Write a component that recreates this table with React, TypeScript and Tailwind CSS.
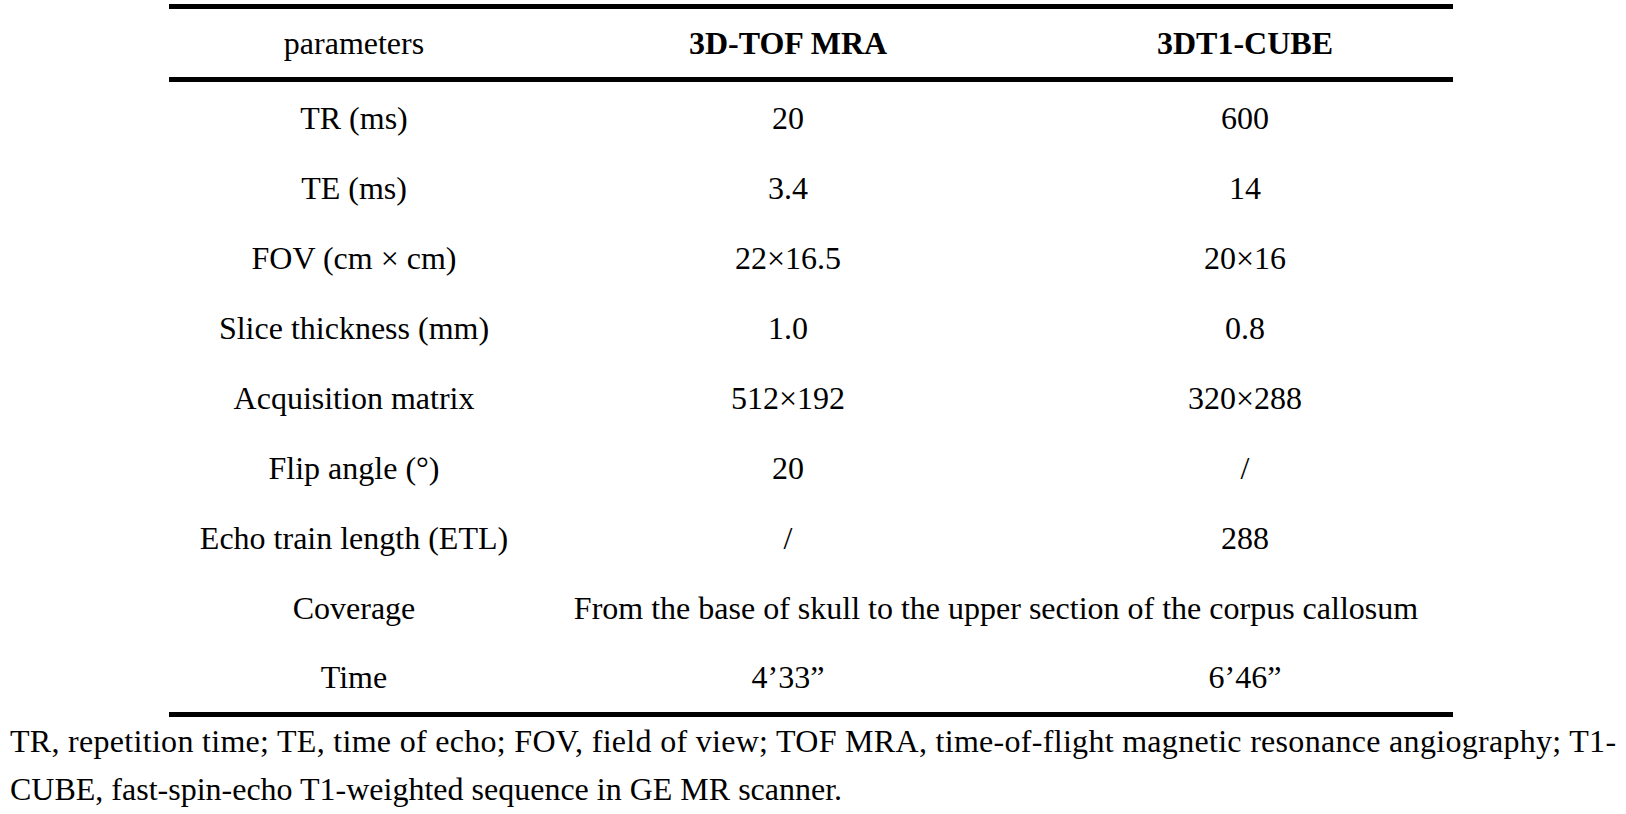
import React from "react";

const rows: [string, string, string][] = [
  ["TR (ms)", "20", "600"],
  ["TE (ms)", "3.4", "14"],
  ["FOV (cm × cm)", "22×16.5", "20×16"],
  ["Slice thickness (mm)", "1.0", "0.8"],
  ["Acquisition matrix", "512×192", "320×288"],
  ["Flip angle (°)", "20", "/"],
  ["Echo train length (ETL)", "/", "288"],
];

export default function App() {
  return (
    <div
      className="w-[1626px] h-[814px] bg-white text-black overflow-hidden text-[32px]"
      style={{ fontFamily: '"Liberation Serif", "Times New Roman", serif' }}
    >
      <div className="pt-[4px] pl-[169px]">
        <div className="w-[1284px] border-t-[5px] border-b-[5px] border-black">
          <div className="grid grid-cols-[370px_498px_416px] h-[73px] items-center border-b-[5px] border-black">
            <div className="text-center">parameters</div>
            <div className="text-center font-bold">3D-TOF MRA</div>
            <div className="text-center font-bold">3DT1-CUBE</div>
          </div>
          {rows.map((r) => (
            <div key={r[0]} className="grid grid-cols-[370px_498px_416px] h-[70px] items-center pt-[2px]">
              <div className="text-center">{r[0]}</div>
              <div className="text-center">{r[1]}</div>
              <div className="text-center">{r[2]}</div>
            </div>
          ))}
          <div className="grid grid-cols-[370px_914px] h-[70px] items-center pt-[1px]">
            <div className="text-center">Coverage</div>
            <div className="text-center whitespace-nowrap">From the base of skull to the upper section of the corpus callosum</div>
          </div>
          <div className="grid grid-cols-[370px_498px_416px] h-[70px] items-center">
            <div className="text-center">Time</div>
            <div className="text-center">4’33”</div>
            <div className="text-center">6’46”</div>
          </div>
        </div>
      </div>
      <div className="pl-[10px] leading-[48px]">
        <div className="whitespace-nowrap tracking-[0.3px]">
          TR, repetition time; TE, time of echo; FOV, field of view; TOF MRA, time-of-flight magnetic resonance angiography; T1-
        </div>
        <div className="whitespace-nowrap">CUBE, fast-spin-echo T1-weighted sequence in GE MR scanner.</div>
      </div>
    </div>
  );
}
